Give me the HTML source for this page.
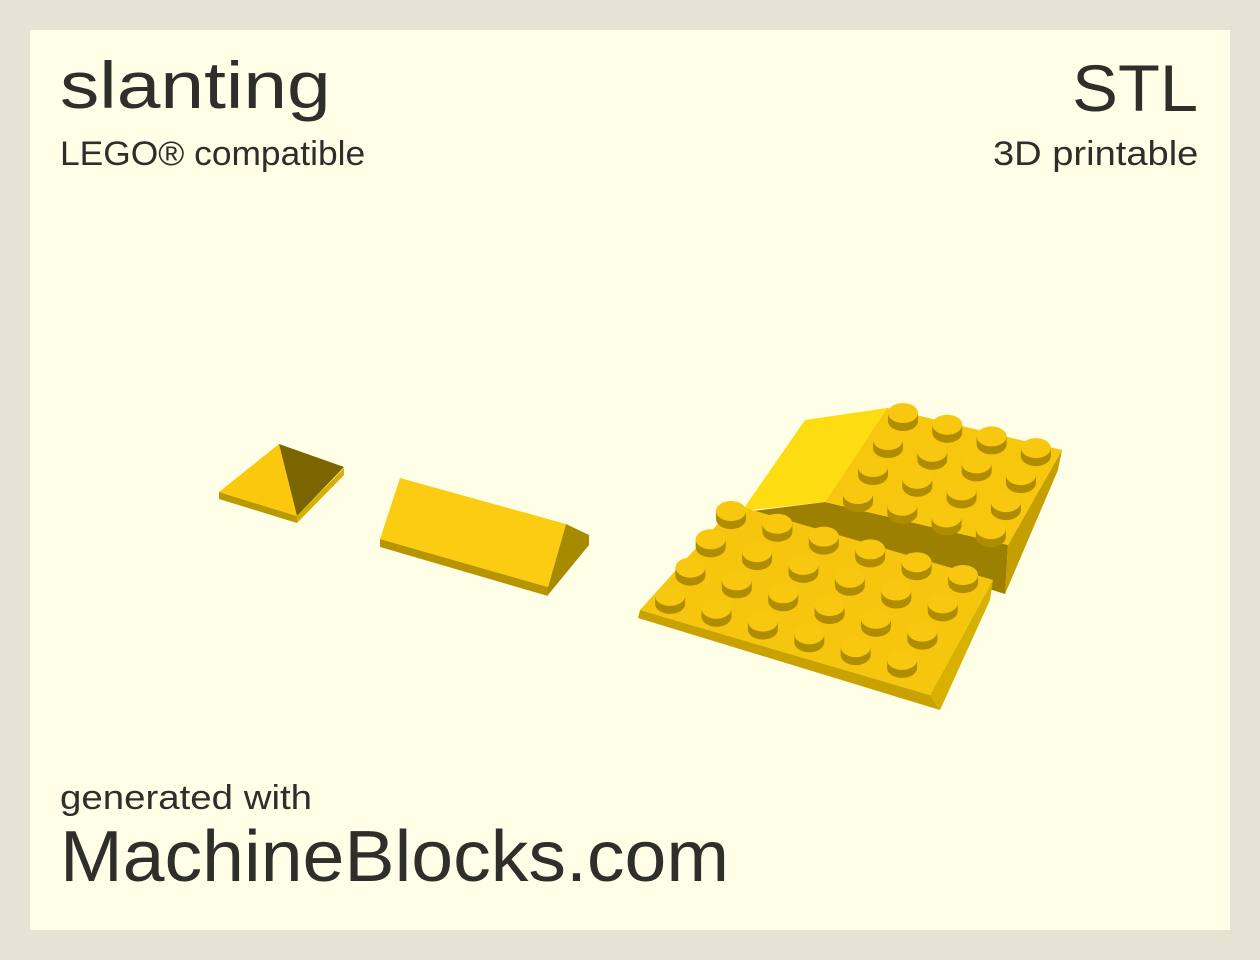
<!DOCTYPE html>
<html><head><meta charset="utf-8"><style>
html,body{margin:0;padding:0;}
body{width:1260px;height:960px;background:#e5e3d3;position:relative;overflow:hidden;font-family:"Liberation Sans",sans-serif;color:#2e2e2a;}
#card{position:absolute;left:30px;top:30px;width:1200px;height:900px;background:#feffe6;}
.t{position:absolute;white-space:nowrap;line-height:1;}
.l{transform-origin:left top;}
.r{transform-origin:right top;}
</style></head><body>
<div id="card"></div>
<div class="t l" style="left:60px;top:52px;font-size:66px;transform:scaleX(1.19);">slanting</div>
<div class="t l" style="left:60px;top:137px;font-size:34px;transform:scaleX(1.04);">LEGO® compatible</div>
<div class="t r" style="right:62px;top:55px;font-size:66px;transform:scaleX(1.04);">STL</div>
<div class="t r" style="right:62px;top:137px;font-size:34px;transform:scaleX(1.12);">3D printable</div>
<div class="t l" style="left:60px;top:781px;font-size:34px;transform:scaleX(1.13);">generated with</div>
<div class="t l" style="left:60px;top:821px;font-size:72px;transform:scaleX(1.045);">MachineBlocks.com</div>
<svg width="1260" height="960" style="position:absolute;left:0;top:0">
<polygon points="219,492 297,516 297,523 219,499" fill="#b99a00"/>
<polygon points="297,516 344,468 344,475 297,523" fill="#d6b000"/>
<polygon points="219,492 279,444 297,516" fill="#fcc80e"/>
<polygon points="279,444 344,467 297,516" fill="#7a6500"/>
<polygon points="380,539 548,587 548,596 380,547" fill="#b89500"/>
<polygon points="566,524 589,535 589,545 548,595 548,587" fill="#a88a00"/>
<polygon points="400,478 566,524 548,587 380,539" fill="#fbcc12"/>
<polygon points="1062,450 1058,470 1005,594 1008,545" fill="#c59f00"/>
<polygon points="745,512 825,502 1008,545 1005,594" fill="#9e8000"/>
<polygon points="805,420 887,408 825,502 742,511" fill="#fddc12"/>
<polygon points="887,408 1062,450 1008,545 825,502" fill="#f7c70e"/>
<g id="studsB"></g>
<polygon points="640,610 930,695 940,710 638,618" fill="#c9a200"/>
<polygon points="993,580 990,600 940,710 930,695" fill="#d8b000"/>
<polygon points="735,505 993,580 930,695 640,610" fill="#f6c60e"/>
<g id="studsF"></g>
</svg>
<script>
function studs(g,x0,y0,cx,cy,rx,ry,nc,nr){
 let s='';
 for(let r=0;r<nr;r++)for(let c=0;c<nc;c++){
  let x=x0+c*cx+r*rx,y=y0+c*cy+r*ry;
  s+=`<path d="M${x-15},${y} L${x-15},${y+8} A15,10 0 0 0 ${x+15},${y+8} L${x+15},${y} Z" fill="#b08c00"/>`;
  s+=`<ellipse cx="${x}" cy="${y}" rx="15" ry="10" fill="#f8c810"/>`;
 }
 document.getElementById(g).innerHTML=s;
}
studs('studsB',903,413,44.3,11.7,-15,27,4,4);
studs('studsF',731,511,46.4,12.8,-20.3,28.3,6,4);
</script>
</body></html>
